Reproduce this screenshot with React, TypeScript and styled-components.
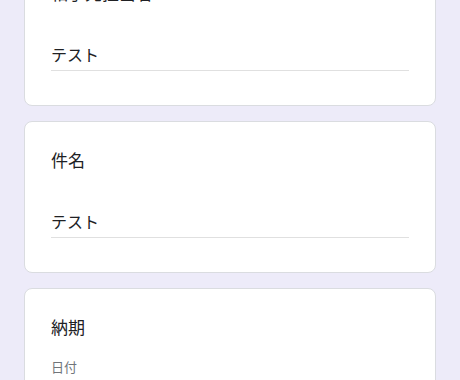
import React from "react";
import { createGlobalStyle, styled } from "styled-components";

const GlobalStyle = createGlobalStyle`
  html, body {
    margin: 0;
    padding: 0;
    background: #edebf9;
  }
  body {
    font-family: Roboto, "Noto Sans CJK JP", sans-serif;
    color: #202124;
  }
`;

const Page = styled.div`
  padding: 0 24px 40px;
  height: 380px;
  overflow: hidden;
`;

const List = styled.div`
  display: flex;
  flex-direction: column;
  gap: 15px;
  margin-top: -46px;
`;

const Card = styled.section`
  background: #fff;
  border: 1px solid #dadce0;
  border-radius: 8px;
  padding: 27px 26px 34px;
`;

const Title = styled.div`
  font-size: 17px;
  line-height: 24px;
  color: #202124;
`;

const TextInput = styled.input`
  display: block;
  width: 100%;
  box-sizing: border-box;
  margin-top: 38px;
  padding: 0 0 2px;
  border: none;
  border-bottom: 1px solid #e0e0e0;
  outline: none;
  font-family: Roboto, "Noto Sans CJK JP", sans-serif;
  font-size: 16px;
  line-height: 24px;
  color: #202124;
  background: transparent;
`;

const SubLabel = styled.div`
  margin-top: 18px;
  font-size: 13px;
  line-height: 20px;
  color: #70757a;
`;

const DateInput = styled.input`
  display: block;
  margin-top: 8px;
  border: none;
  border-bottom: 1px solid #e0e0e0;
  font-family: Roboto, "Noto Sans CJK JP", sans-serif;
  font-size: 16px;
  line-height: 24px;
  color: #70757a;
`;

function TextQuestion({ title, value }: { title: string; value: string }) {
  return (
    <Card>
      <Title>{title}</Title>
      <TextInput defaultValue={value} />
    </Card>
  );
}

export default function App() {
  return (
    <>
      <GlobalStyle />
      <Page>
        <List>
          <TextQuestion title="相手先担当者" value="テスト" />
          <TextQuestion title="件名" value="テスト" />
          <Card>
            <Title>納期</Title>
            <SubLabel>日付</SubLabel>
            <DateInput type="text" placeholder="年 / 月 / 日" />
          </Card>
        </List>
      </Page>
    </>
  );
}
